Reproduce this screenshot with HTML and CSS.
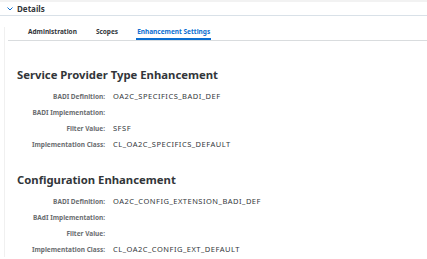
FILE: index.html
```html
<!DOCTYPE html>
<html lang="en">

<head>
    <meta charset="UTF-8">
    <title>Details</title>
    <link rel="stylesheet" href="styles.css">
</head>

<body>
    <div class="page">
        <div class="section-header">
            <svg class="chevron" width="6" height="4" viewBox="0 0 6 4">
                <path d="M0.5 0.5 L3 3 L5.5 0.5" fill="none" stroke="#0a6ed1" stroke-width="1"/>
            </svg>
            <span class="section-title">Details</span>
        </div>
        <div class="panel">
            <div class="tabbar">
                <span class="tab">Administration</span>
                <span class="tab">Scopes</span>
                <span class="tab active">Enhancement Settings</span>
            </div>

            <div class="group">
                <h2 class="group-title">Service Provider Type Enhancement</h2>
                <div class="row"><span class="label">BADI Definition:</span><span class="value">OA2C_SPECIFICS_BADI_DEF</span></div>
                <div class="row"><span class="label">BADI Implementation:</span><span class="value"></span></div>
                <div class="row"><span class="label">Filter Value:</span><span class="value">SFSF</span></div>
                <div class="row"><span class="label">Implementation Class:</span><span class="value">CL_OA2C_SPECIFICS_DEFAULT</span></div>
            </div>

            <div class="group">
                <h2 class="group-title">Configuration Enhancement</h2>
                <div class="row"><span class="label">BADI Definition:</span><span class="value">OA2C_CONFIG_EXTENSION_BADI_DEF</span></div>
                <div class="row"><span class="label">BAdI Implementation:</span><span class="value"></span></div>
                <div class="row"><span class="label">Filter Value:</span><span class="value"></span></div>
                <div class="row"><span class="label">Implementation Class:</span><span class="value">CL_OA2C_CONFIG_EXT_DEFAULT</span></div>
            </div>
        </div>
    </div>
</body>

</html>
```

FILE: styles.css
```css
* {
    margin: 0px;
    padding: 0px;
    box-sizing: border-box;
}

body {
    background-color: #fff;
    font-family: "Noto Sans", "Open Sans", sans-serif;
    color: #32363a;
    width: 427px;
    height: 259px;
    overflow: hidden;
}

.page {
    border-top: 2px solid #f2f2f2;
}

.section-header {
    height: 14px;
    display: flex;
    align-items: center;
    padding-left: 7px;
    border-bottom: 1px solid #d9e1e8;
}

.chevron {
    margin-right: 4px;
}

.section-title {
    font-size: 8px;
    font-weight: bold;
    line-height: 10px;
}

.panel {
    margin-left: 4px;
    border-left: 1px solid #f0f0f0;
}

.tabbar {
    margin-top: 11px;
    margin-left: 3px;
    padding-left: 19px;
    display: flex;
    gap: 17px;
    border-bottom: 1px solid #d9dcde;
}

.tab {
    font-size: 6.5px;
    font-weight: bold;
    line-height: 10px;
    padding: 0 1px 1px 1px;
    border-bottom: 2px solid transparent;
}

.tab.active {
    color: #0a6ed1;
    border-bottom-color: #0a6ed1;
}

.group {
    padding-left: 12px;
    margin-top: 27px;
}

.group + .group {
    margin-top: 21px;
}

.group-title {
    font-size: 11.3px;
    font-weight: bold;
    line-height: 14px;
    margin-bottom: 6px;
}

.row {
    display: flex;
    gap: 8px;
    height: 16px;
    align-items: center;
    font-size: 6.5px;
}

.label {
    width: 88px;
    text-align: right;
    color: #6a6d70;
    font-weight: bold;
}

.value {
    font-size: 7.5px;
    letter-spacing: 0.5px;
    color: #32363a;
}
```
